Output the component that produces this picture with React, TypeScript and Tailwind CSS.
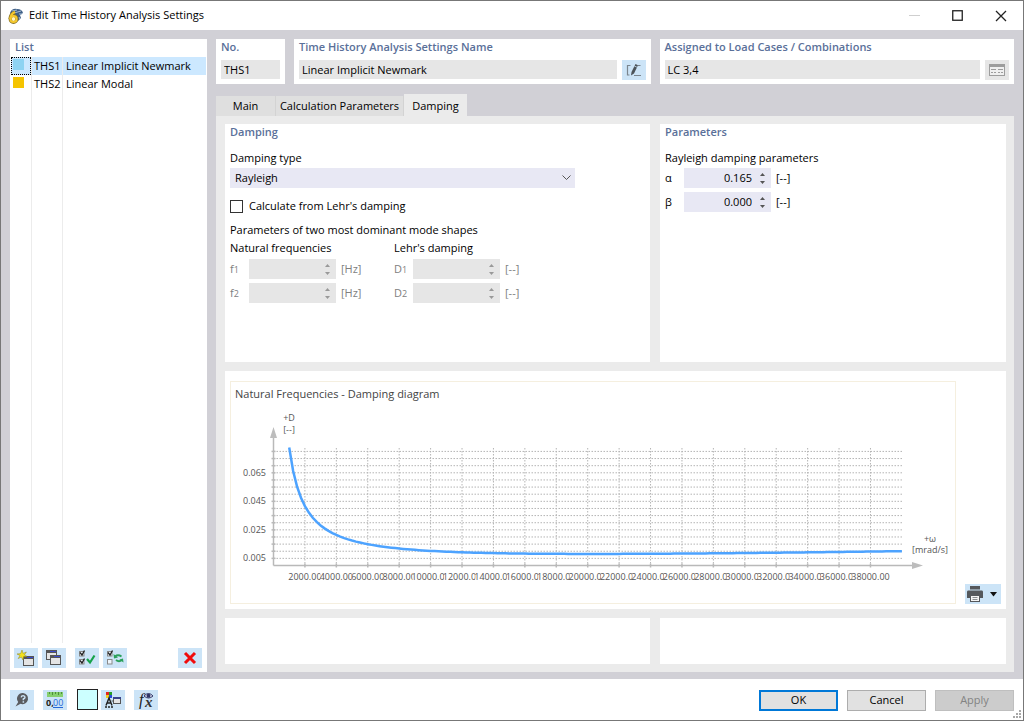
import React from "react";
import clsx from "clsx";

const settings = [
  { id: "THS1", name: "Linear Implicit Newmark", color: "bg-[#8ed3f2]" },
  { id: "THS2", name: "Linear Modal", color: "bg-[#f5c400]" },
];

const tabs = ["Main", "Calculation Parameters", "Damping"];

function AppIcon() {
  return (
    <svg width="16" height="16" viewBox="0 0 16 16" aria-hidden="true">
      <path d="M2 5 Q4 0 9 1 Q14 1 15 5 L12 7 L13 10 L10 13 L4 8 Z" fill="#3f5f86" />
      <path d="M4 3 L9 2 M6 5 L13 3 M11 6 L14 6 M11 9 L12 11" stroke="#a9bfd6" strokeWidth="1" />
      <path d="M7 4 Q2 6 2 11" stroke="#8a7426" strokeWidth="3" fill="none" />
      <circle cx="5.5" cy="11" r="3.4" fill="#fff6c0" stroke="#8a7426" strokeWidth="3" />
      <path d="M7 4 Q2.5 6 2.3 11" stroke="#f5c92f" strokeWidth="2" fill="none" />
      <circle cx="5.5" cy="11" r="3.1" fill="none" stroke="#f5c92f" strokeWidth="2" />
    </svg>
  );
}

function WindowGlyph({ x, y }: { x: number; y: number }) {
  return (
    <g>
      <rect x={x + 0.5} y={y + 0.5} width="10" height="9" fill="#e4e4e4" stroke="#555" />
      <rect x={x} y={y} width="11" height="3" fill="#555" />
      <rect x={x + 4} y={y + 1} width="6" height="1" fill="#3b49c9" />
    </g>
  );
}

function NewIcon() {
  return (
    <svg width="18" height="16" viewBox="0 0 18 16">
      <WindowGlyph x={6} y={6} />
      <path d="M5 0 L6 3.4 L9.4 2 L7.4 5 L10 6.4 L6.6 6.6 L6 10 L4.4 7 L1.2 8.6 L3 5.4 L0 4 L3.6 3.6 Z" fill="#f4e21c" stroke="#8a8420" strokeWidth=".5" />
    </svg>
  );
}

function CopyIcon() {
  return (
    <svg width="18" height="16" viewBox="0 0 18 16">
      <WindowGlyph x={1} y={0} />
      <WindowGlyph x={5} y={5} />
    </svg>
  );
}

function CheckBoxGlyph({ y, checked }: { y: number; checked?: boolean }) {
  return (
    <g>
      <rect x="1.5" y={y + 0.5} width="4.5" height="4.5" fill="#eef5fb" stroke="#8a8a8a" />
      {checked && (
        <path d={`M2 ${y + 1.5} L4 ${y + 4} L6.5 ${y - 0.5}`} fill="none" stroke="#222" strokeWidth="1.3" />
      )}
    </g>
  );
}

function CheckAllIcon() {
  return (
    <svg width="18" height="16" viewBox="0 0 18 16">
      <CheckBoxGlyph y={1} checked />
      <CheckBoxGlyph y={9} checked />
      <path d="M9 9 L12 12.5 L16.5 5.5" fill="none" stroke="#16a34a" strokeWidth="2.2" />
    </svg>
  );
}

function InvertIcon() {
  return (
    <svg width="18" height="16" viewBox="0 0 18 16">
      <CheckBoxGlyph y={1} checked />
      <CheckBoxGlyph y={9} />
      <path d="M9 6.5 Q12 4 15.5 6.5 M16 10 Q13 12.5 10 10" fill="none" stroke="#2aa05a" strokeWidth="1.8" />
      <path d="M7.5 4 L8 8.5 L12 7.5 Z M17.5 12.5 L17 8.5 L13.4 9.5 Z" fill="#2aa05a" />
    </svg>
  );
}

function DeleteIcon() {
  return (
    <svg width="14" height="14" viewBox="0 0 14 14">
      <path d="M2 2 L12 12 M12 2 L2 12" stroke="#f00c0c" strokeWidth="3" />
    </svg>
  );
}

function HelpIcon() {
  return (
    <svg width="16" height="16" viewBox="0 0 16 16">
      <path d="M9 1 A5.6 5.6 0 1 1 6.5 11.8 L1.5 14.5 L4.2 10 A5.6 5.6 0 0 1 9 1 Z" fill="#5a5c60" />
      <path d="M7.2 5.4 Q7.4 3.6 9.2 3.6 Q11 3.7 11 5.2 Q11 6.3 9.3 7 V8.3" fill="none" stroke="#cce4f7" strokeWidth="1.4" />
      <rect x="8.6" y="9.2" width="1.5" height="1.5" fill="#cce4f7" />
    </svg>
  );
}

function UnitsIcon() {
  return (
    <svg width="18" height="18" viewBox="0 0 18 18">
      <rect x="1" y="1" width="16" height="5" fill="#86cf6e" />
      <path d="M3.5 1 V3 M6.5 1 V4 M9.5 1 V3 M12.5 1 V4 M15.5 1 V3" stroke="#4d8f3c" strokeWidth="1" />
      <text x="0" y="15" className="font-['Open_Sans',sans-serif] text-[9px] font-bold" fill="#222">0,</text>
      <text x="7" y="15" className="font-['Open_Sans',sans-serif] text-[9px]" fill="#2468d8">00</text>
      <path d="M7 16.5 H17" stroke="#2468d8" />
    </svg>
  );
}

function DisplayIcon() {
  return (
    <svg width="18" height="18" viewBox="0 0 18 18">
      <rect x="2" y="1" width="3" height="3" fill="#e52620" />
      <rect x="5" y="1" width="3" height="3" fill="#26a026" />
      <rect x="2" y="4" width="3" height="3" fill="#f2d21c" />
      <rect x="5" y="4" width="3" height="3" fill="#2b48d8" />
      <path d="M2 14.5 L5 7 L8 14.5 M3 12 H7" fill="none" stroke="#222" strokeWidth="1.4" />
      <path d="M1 16 H9" stroke="#222" strokeWidth="1.4" strokeDasharray="2 1" />
      <path d="M7.5 10 H10" stroke="#555" />
      <rect x="9.5" y="6.5" width="7" height="6" fill="#e4e4e4" stroke="#555" />
      <rect x="9" y="6" width="8" height="2" fill="#3a448c" />
    </svg>
  );
}

function FormulaIcon() {
  return (
    <svg width="18" height="18" viewBox="0 0 18 18">
      <text x="2" y="14" className="font-['Liberation_Serif',serif] text-[16px] italic" fill="#222">f</text>
      <text x="8" y="16" className="font-['Liberation_Serif',serif] text-[15px] font-bold italic" fill="#333">x</text>
      <path d="M7 5 Q11.5 0 16 5 Q11.5 9 7 5 Z" fill="#dfe3f5" stroke="#2f3566" />
      <circle cx="11.5" cy="4.7" r="2" fill="#2f3566" />
    </svg>
  );
}

function EditIcon() {
  return (
    <svg width="18" height="14" viewBox="0 0 18 14">
      <path d="M5.5 2.5 H2.5 V12 H4.5 M13 2.5 H15.5 M9 12.5 H16" fill="none" stroke="#7b868f" strokeWidth="1.2" />
      <path d="M6 12.5 L6.5 9 L10.5 1 L13 2.2 L9 10.4 Z" fill="#4c5359" />
      <path d="M9.4 3 L11.9 4.2" stroke="#cce4f7" strokeWidth=".8" />
    </svg>
  );
}

function LoadCasesIcon() {
  return (
    <svg width="16" height="12" viewBox="0 0 16 12">
      <rect x=".5" y=".5" width="15" height="11" fill="#efefef" stroke="#9d9d9d" />
      <rect x="0" y="0" width="16" height="3" fill="#9d9d9d" />
      <path d="M2 5.5 H7 M9 5.5 H14 M2 8.5 H4 M5 8.5 H7 M9 8.5 H11 M12 8.5 H14" stroke="#9d9d9d" />
    </svg>
  );
}

function PrinterIcon() {
  return (
    <svg width="16" height="16" viewBox="0 0 16 16">
      <rect x="3" y="0" width="10" height="3.5" fill="#55585c" />
      <path d="M1 4.5 H15 Q16 4.5 16 6 V12 H13 V9 H3 V12 H0 V6 Q0 4.5 1 4.5 Z" fill="#55585c" />
      <rect x="3.5" y="9.5" width="9" height="6" fill="#f4f4f4" stroke="#55585c" />
      <path d="M5.5 11.5 H10.5 M5.5 13.5 H10.5" stroke="#8a8d90" />
    </svg>
  );
}

type ToolButtonProps = {
  label: string;
  children: React.ReactNode;
  className?: string;
};

function ToolButton({ label, children, className = "bg-[#cce4f7]" }: ToolButtonProps) {
  return (
    <button
      type="button"
      aria-label={label}
      className={clsx("flex h-5 w-6 shrink-0 items-center justify-center", className)}
    >
      {children}
    </button>
  );
}

function PanelTitle({ children }: { children: React.ReactNode }) {
  return <h2 className="font-semibold leading-4 text-[#5a7099]">{children}</h2>;
}

function TitleBar() {
  return (
    <header className="flex h-[29px] items-center bg-white pl-[7px] pr-4">
      <AppIcon />
      <h1 className="ml-[5px] flex-1">Edit Time History Analysis Settings</h1>
      <div className="flex items-center gap-8">
        <button type="button" aria-label="Minimize" disabled>
          <svg width="11" height="11" viewBox="0 0 11 11">
            <path d="M0 5.5 H11" stroke="#cfcfcf" />
          </svg>
        </button>
        <button type="button" aria-label="Maximize">
          <svg width="11" height="11" viewBox="0 0 11 11">
            <rect x=".75" y=".75" width="9.5" height="9.5" fill="none" stroke="#222" strokeWidth="1.3" />
          </svg>
        </button>
        <button type="button" aria-label="Close">
          <svg width="12" height="12" viewBox="0 0 12 12">
            <path d="M1 1 L11 11 M11 1 L1 11" stroke="#222" strokeWidth="1.3" />
          </svg>
        </button>
      </div>
    </header>
  );
}

function SettingsList() {
  const [selected, setSelected] = React.useState("THS1");

  return (
    <aside className="flex w-[197px] shrink-0 flex-col bg-white pb-1">
      <div className="px-[5px] pb-0.5">
        <PanelTitle>List</PanelTitle>
      </div>
      <ul className="mx-px">
        {settings.map((s) => (
          <li key={s.id}>
            <button
              type="button"
              onClick={() => setSelected(s.id)}
              className={clsx(
                "grid h-[18px] w-full grid-cols-[20px_32px_1fr] items-stretch text-left",
                selected === s.id && "bg-[#cce8ff]"
              )}
            >
              <span
                className={clsx(
                  "border border-dotted p-px",
                  selected === s.id ? "border-black" : "border-transparent"
                )}
              >
                <span className={clsx("block h-[11px] w-[11px]", s.color)}></span>
              </span>
              <span className="border-x border-[#ececec] pl-0.5 leading-[18px]">{s.id}</span>
              <span className="pl-[3px] leading-[18px]">{s.name}</span>
            </button>
          </li>
        ))}
      </ul>
      <div className="mx-px grid flex-1 grid-cols-[20px_32px_1fr]">
        <span></span>
        <span className="border-x border-[#ececec]"></span>
      </div>
      <div className="flex pl-1 pr-[5px] pt-[5px]">
        <ToolButton label="New"><NewIcon /></ToolButton>
        <ToolButton label="Copy" className="ml-1 bg-[#cce4f7]"><CopyIcon /></ToolButton>
        <ToolButton label="Select all" className="ml-[9px] bg-[#cce4f7]"><CheckAllIcon /></ToolButton>
        <ToolButton label="Invert selection" className="ml-1 bg-[#cce4f7]"><InvertIcon /></ToolButton>
        <ToolButton label="Delete" className="ml-auto bg-[#cce4f7]"><DeleteIcon /></ToolButton>
      </div>
    </aside>
  );
}

type HeaderFieldProps = {
  id: string;
  title: string;
  value: string;
  children?: React.ReactNode;
};

function HeaderField({ id, title, value, children }: HeaderFieldProps) {
  return (
    <section className="h-[45px] min-w-0 bg-white px-[5px]">
      <label htmlFor={id} className="block font-semibold leading-4 text-[#5a7099]">
        {title}
      </label>
      <div className="flex gap-[5px] pt-[5px]">
        <input id={id} readOnly defaultValue={value} className="h-[19px] min-w-0 flex-1 bg-[#e6e6e6] px-[3px]" />
        {children}
      </div>
    </section>
  );
}

type SpinFieldProps = {
  id: string;
  label: React.ReactNode;
  unit: string;
  value?: string;
  disabled?: boolean;
};

function SpinField({ id, label, unit, value = "", disabled }: SpinFieldProps) {
  return (
    <div className={clsx("flex h-5 items-center", disabled && "text-[#808080]")}>
      <label htmlFor={id} className="w-[19px] leading-5">{label}</label>
      <div className={clsx("flex h-5 w-[87px]", disabled ? "bg-[#e6e6e6]" : "bg-[#e8e8f4]")}>
        <input
          id={id}
          defaultValue={value}
          disabled={disabled}
          className="min-w-0 flex-1 bg-transparent text-right"
        />
        <div className="flex w-[19px] flex-col items-center justify-center gap-[5px] pl-0.5">
          <button type="button" aria-label="Increase" disabled={disabled}>
            <svg className="block" width="5" height="3" viewBox="0 0 5 3">
              <path d="M0 3 L2.5 0 L5 3 Z" fill={disabled ? "#999" : "#555"} />
            </svg>
          </button>
          <button type="button" aria-label="Decrease" disabled={disabled}>
            <svg className="block" width="5" height="3" viewBox="0 0 5 3">
              <path d="M0 0 L2.5 3 L5 0 Z" fill={disabled ? "#999" : "#555"} />
            </svg>
          </button>
        </div>
      </div>
      <span className="pl-[5px]">{unit}</span>
    </div>
  );
}

function DampingPanel() {
  return (
    <section className="bg-white px-[5px]">
      <PanelTitle>Damping</PanelTitle>
      <label htmlFor="damping-type" className="mt-2 block leading-5">Damping type</label>
      <div className="relative h-5 w-[345px]">
        <select id="damping-type" className="h-5 w-full appearance-none bg-[#e8e8f4] pl-[5px]">
          <option>Rayleigh</option>
          <option>Lehr's damping</option>
        </select>
        <svg className="pointer-events-none absolute right-1 top-[7px]" width="9" height="6" viewBox="0 0 9 6">
          <path d="M.5 .5 L4.5 4.5 L8.5 .5" fill="none" stroke="#555" />
        </svg>
      </div>
      <label className="mt-2 flex h-5 items-center gap-[6px]">
        <input type="checkbox" className="h-[13px] w-[13px] appearance-none border border-[#333] bg-white checked:bg-[#0078d7]" />
        Calculate from Lehr's damping
      </label>
      <p className="mt-1 leading-5">Parameters of two most dominant mode shapes</p>
      <div className="flex">
        <div className="w-[164px]">
          <h3 className="leading-4">Natural frequencies</h3>
          <div className="mt-[3px] flex flex-col gap-1">
            <SpinField id="f1" label={<>f<span className="text-[9px]">1</span></>} unit="[Hz]" disabled />
            <SpinField id="f2" label={<>f<span className="text-[9px]">2</span></>} unit="[Hz]" disabled />
          </div>
        </div>
        <div>
          <h3 className="leading-4">Lehr's damping</h3>
          <div className="mt-[3px] flex flex-col gap-1">
            <SpinField id="d1" label={<>D<span className="text-[9px]">1</span></>} unit="[--]" disabled />
            <SpinField id="d2" label={<>D<span className="text-[9px]">2</span></>} unit="[--]" disabled />
          </div>
        </div>
      </div>
    </section>
  );
}

function ParametersPanel() {
  return (
    <section className="bg-white px-[5px]">
      <PanelTitle>Parameters</PanelTitle>
      <h3 className="mt-2 leading-5">Rayleigh damping parameters</h3>
      <div className="flex flex-col gap-1">
        <SpinField id="alpha" label="α" unit="[--]" value="0.165" />
        <SpinField id="beta" label="β" unit="[--]" value="0.000" />
      </div>
    </section>
  );
}

// chart origin and scale, in svg units
const X0 = 42.5;
const Y0 = 159.5;
const PX_PER_RAD = 15.71;
const PX_PER_D = 1426;

// Rayleigh: D = (alpha / w + beta * w) / 2
const curve = Array.from({ length: 157 }, (_, i) => {
  const w = 1 + i * 0.25;
  const d = (0.165 / w + 0.0004 * w) / 2;
  return `${X0 + w * PX_PER_RAD},${Y0 - d * PX_PER_D}`;
}).join(" ");

const xTicks = Array.from({ length: 19 }, (_, i) => (i + 1) * 2);
const yTicks = Array.from({ length: 16 }, (_, i) => (i + 1) * 0.005);
const yLabels = [0.005, 0.025, 0.045, 0.065];

function DampingChart() {
  return (
    <svg viewBox="0 1 724 196" className="block w-full text-[9px]" fill="#555" role="img" aria-label="Damping diagram">
      <g stroke="#b4b4b4" strokeDasharray="1.5 1.5">
        {yTicks.map((d) => (
          <line key={d} x1={X0} x2="671" y1={Y0 - d * PX_PER_D} y2={Y0 - d * PX_PER_D} />
        ))}
        {xTicks.map((w) => (
          <line key={w} x1={X0 + w * PX_PER_RAD} x2={X0 + w * PX_PER_RAD} y1="42" y2={Y0} />
        ))}
      </g>
      <g stroke="#b9b9b9" strokeWidth="1.5">
        <line x1={X0} x2={X0} y1="30" y2={Y0} />
        <line x1={X0} x2="684" y1={Y0} y2={Y0} />
        {yTicks.map((d) => (
          <line key={d} x1={X0 - 2} x2={X0 + 2} y1={Y0 - d * PX_PER_D} y2={Y0 - d * PX_PER_D} />
        ))}
        {xTicks.map((w) => (
          <line key={w} x1={X0 + w * PX_PER_RAD} x2={X0 + w * PX_PER_RAD} y1={Y0 - 2} y2={Y0 + 2} />
        ))}
      </g>
      <path d="M42.5 21 L46 32 H39 Z M692 159.5 L681 156 V163 Z" fill="#bdbdbd" />
      <polyline points={curve} fill="none" stroke="#4da3ff" strokeWidth="2.5" />
      <text x="58" y="15" textAnchor="middle">+D</text>
      <text x="58" y="27" textAnchor="middle">[--]</text>
      <text x="699" y="136" textAnchor="middle">+ω</text>
      <text x="699" y="147" textAnchor="middle">[mrad/s]</text>
      {yLabels.map((d) => (
        <text key={d} x="35" y={Y0 - d * PX_PER_D + 3} textAnchor="end">{d.toFixed(3)}</text>
      ))}
      {/* every label covers the end of the one before it */}
      {xTicks.map((w) => (
        <g key={w}>
          <rect x={X0 + w * PX_PER_RAD - (w < 10 ? 16 : 18)} y="165" width="36" height="12" fill="#fff" />
          <text x={X0 + w * PX_PER_RAD} y="174" textAnchor="middle">{(w * 1000).toFixed(2)}</text>
        </g>
      ))}
    </svg>
  );
}

function DiagramPanel() {
  return (
    <section className="flex items-end gap-[9px] bg-white px-[5px] pb-[5px] pt-[10px]">
      <figure className="min-w-0 flex-1 border border-[#f5efdf]">
        <figcaption className="px-1 pb-[3px] pt-0.5 leading-5 text-[#444]">
          Natural Frequencies - Damping diagram
        </figcaption>
        <DampingChart />
      </figure>
      <button type="button" aria-label="Print" className="flex h-5 w-9 items-center justify-between bg-[#cce4f7] pl-0.5 pr-1">
        <PrinterIcon />
        <svg width="7" height="5" viewBox="0 0 7 5">
          <path d="M0 0 H7 L3.5 4.5 Z" fill="#111" />
        </svg>
      </button>
    </section>
  );
}

function Tabs() {
  return (
    <div role="tablist" className="flex items-end pt-[10px]">
      {tabs.map((t) => (
        <button
          key={t}
          type="button"
          role="tab"
          aria-selected={t === "Damping"}
          className={clsx(
            t === "Damping"
              ? "h-[22px] w-[63px] bg-[#ebebeb] pt-0.5"
              : "h-5 border-r border-[#d3d3d3] bg-[#dfdfdf]",
            t === "Main" && "w-[60px]",
            t === "Calculation Parameters" && "w-[128px]"
          )}
        >
          {t}
        </button>
      ))}
    </div>
  );
}

function Footer() {
  return (
    <footer className="flex h-[41px] items-center bg-white px-[9px]">
      <ToolButton label="Help"><HelpIcon /></ToolButton>
      <ToolButton label="Units" className="ml-[9px] bg-[#cce4f7]"><UnitsIcon /></ToolButton>
      <button type="button" aria-label="Color" className="ml-[10px] h-[21px] w-[21px] border border-[#222] bg-[#ccffff]"></button>
      <ToolButton label="Display" className="ml-[3px] bg-[#cce4f7]"><DisplayIcon /></ToolButton>
      <ToolButton label="Formula" className="ml-[9px] bg-[#cce4f7]"><FormulaIcon /></ToolButton>
      <div className="ml-auto flex gap-[9px] pt-px">
        <button type="button" className="h-[21px] w-[79px] border-2 border-[#0078d7] bg-[#e1e1e1]">OK</button>
        <button type="button" className="h-[21px] w-[79px] border border-[#adadad] bg-[#e1e1e1]">Cancel</button>
        <button type="button" disabled className="h-[21px] w-[79px] border border-[#bfbfbf] bg-[#cccccc] text-[#838383]">Apply</button>
      </div>
      <svg className="absolute bottom-0.5 right-0.5" width="8" height="8" viewBox="0 0 8 8" fill="#a8a8a8">
        <path d="M6 0h2v2h-2z M3 3h2v2h-2z M6 3h2v2h-2z M0 6h2v2h-2z M3 6h2v2h-2z M6 6h2v2h-2z" />
      </svg>
    </footer>
  );
}

export default function App() {
  return (
    <div className="relative flex min-h-screen flex-col border border-[#777] bg-[#d1d0d6] font-['Open_Sans','Noto_Sans',sans-serif] text-[11px] text-black">
      <TitleBar />
      <div className="flex flex-1 gap-[9px] px-[9px] pb-[7px] pt-[9px]">
        <SettingsList />
        <main className="flex min-w-0 flex-1 flex-col">
          <div className="grid grid-cols-[69px_356fr_354fr] gap-[9px]">
            <HeaderField id="no" title="No." value="THS1" />
            <HeaderField id="name" title="Time History Analysis Settings Name" value="Linear Implicit Newmark">
              <ToolButton label="Edit name"><EditIcon /></ToolButton>
            </HeaderField>
            <HeaderField id="assigned" title="Assigned to Load Cases / Combinations" value="LC 3,4">
              <ToolButton label="Load cases" className="bg-[#e6e6e6]"><LoadCasesIcon /></ToolButton>
            </HeaderField>
          </div>
          <Tabs />
          <div className="flex flex-1 flex-col gap-[9px] bg-[#ebebeb] pb-2 pl-[9px] pr-2 pt-2">
            <div className="grid flex-1 grid-cols-[425fr_346fr] gap-[10px]">
              <DampingPanel />
              <ParametersPanel />
            </div>
            <DiagramPanel />
            <div className="grid h-[46px] grid-cols-[425fr_346fr] gap-[10px]">
              <div className="bg-white"></div>
              <div className="bg-white"></div>
            </div>
          </div>
        </main>
      </div>
      <Footer />
    </div>
  );
}
